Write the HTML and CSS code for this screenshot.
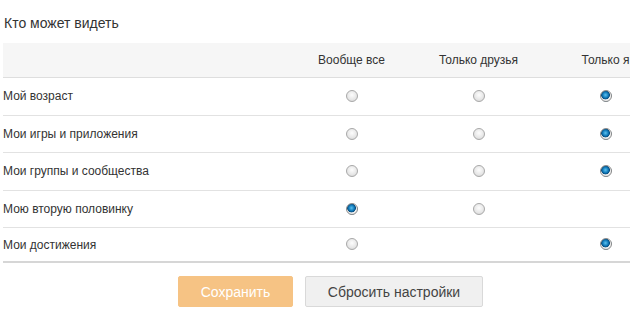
FILE: index.html
```html
<!DOCTYPE html>
<html lang="ru">
<head>
<meta charset="utf-8">
<link rel="stylesheet" href="styles.css">
</head>
<body>
<div class="panel">
  <h2 class="title">Кто может видеть</h2>
  <table class="privacy">
    <thead>
      <tr>
        <th class="label-col"></th>
        <th>Вообще все</th>
        <th>Только друзья</th>
        <th>Только я</th>
      </tr>
    </thead>
    <tbody>
      <tr>
        <td class="label">Мой возраст</td>
        <td><span class="radio"></span></td>
        <td><span class="radio"></span></td>
        <td><span class="radio checked"></span></td>
      </tr>
      <tr>
        <td class="label">Мои игры и приложения</td>
        <td><span class="radio"></span></td>
        <td><span class="radio"></span></td>
        <td><span class="radio checked"></span></td>
      </tr>
      <tr>
        <td class="label">Мои группы и сообщества</td>
        <td><span class="radio"></span></td>
        <td><span class="radio"></span></td>
        <td><span class="radio checked"></span></td>
      </tr>
      <tr>
        <td class="label">Мою вторую половинку</td>
        <td><span class="radio checked"></span></td>
        <td><span class="radio"></span></td>
        <td></td>
      </tr>
      <tr class="last">
        <td class="label">Мои достижения</td>
        <td><span class="radio"></span></td>
        <td></td>
        <td><span class="radio checked"></span></td>
      </tr>
    </tbody>
  </table>
  <div class="actions">
    <button class="btn btn-save">Сохранить</button>
    <button class="btn btn-reset">Сбросить настройки</button>
  </div>
</div>
</body>
</html>
```

FILE: styles.css
```css
html, body {
  margin: 0;
  padding: 0;
  background: #fff;
  overflow: hidden;
}
body {
  font-family: "Liberation Sans", Arial, sans-serif;
  color: #333;
}
.panel {
  width: 630px;
  overflow: hidden;
  padding-left: 3px;
  box-sizing: border-box;
}
.title {
  margin: 0;
  padding: 13px 0 10px 1px;
  font-size: 14px;
  font-weight: normal;
  line-height: 20px;
  color: #333;
}
.privacy {
  border-collapse: collapse;
  width: 666px;
  table-layout: fixed;
  font-size: 12px;
}
.privacy th {
  background: #f6f6f6;
  height: 34px;
  padding: 0;
  font-weight: normal;
  color: #333;
  text-align: center;
  border-bottom: 1px solid #dedede;
  width: 127px;
}
.privacy th.label-col {
  width: 285px;
}
.privacy td {
  height: 36.5px;
  padding: 0;
  text-align: center;
  border-bottom: 1px solid #e2e2e2;
  vertical-align: middle;
}
.privacy tr.last td {
  border-bottom: 2px solid #d6d6d6;
  height: 33px;
}
.privacy td.label {
  text-align: left;
  color: #333;
}
.radio {
  display: inline-block;
  width: 12px;
  height: 12px;
  border-radius: 50%;
  box-sizing: border-box;
  border: 1px solid #a9a9a9;
  background: radial-gradient(circle at 50% 40%, #fdfdfd 0%, #e6e6e6 60%, #cfcfcf 100%);
  vertical-align: middle;
  position: relative;
  top: -1px;
}
.radio.checked {
  border-color: #8a8a8a;
  background: radial-gradient(circle at 45% 40%, #5cc2f0 0%, #0f78b8 35%, #0a4f80 50%, #f2f2f2 58%, #dcdcdc 100%);
}
.actions {
  display: flex;
  gap: 12px;
  padding: 13px 0 0 175px;
}
.btn {
  height: 31px;
  font-family: "Liberation Sans", Arial, sans-serif;
  font-size: 14px;
  border-radius: 2px;
  padding: 0;
  cursor: pointer;
}
.btn-save {
  width: 115px;
  background: #f6c384;
  border: 1px solid #f6c384;
  color: #fff;
}
.btn-reset {
  width: 178px;
  background: #f0f0f0;
  border: 1px solid #d9d9d9;
  color: #444;
}
```
